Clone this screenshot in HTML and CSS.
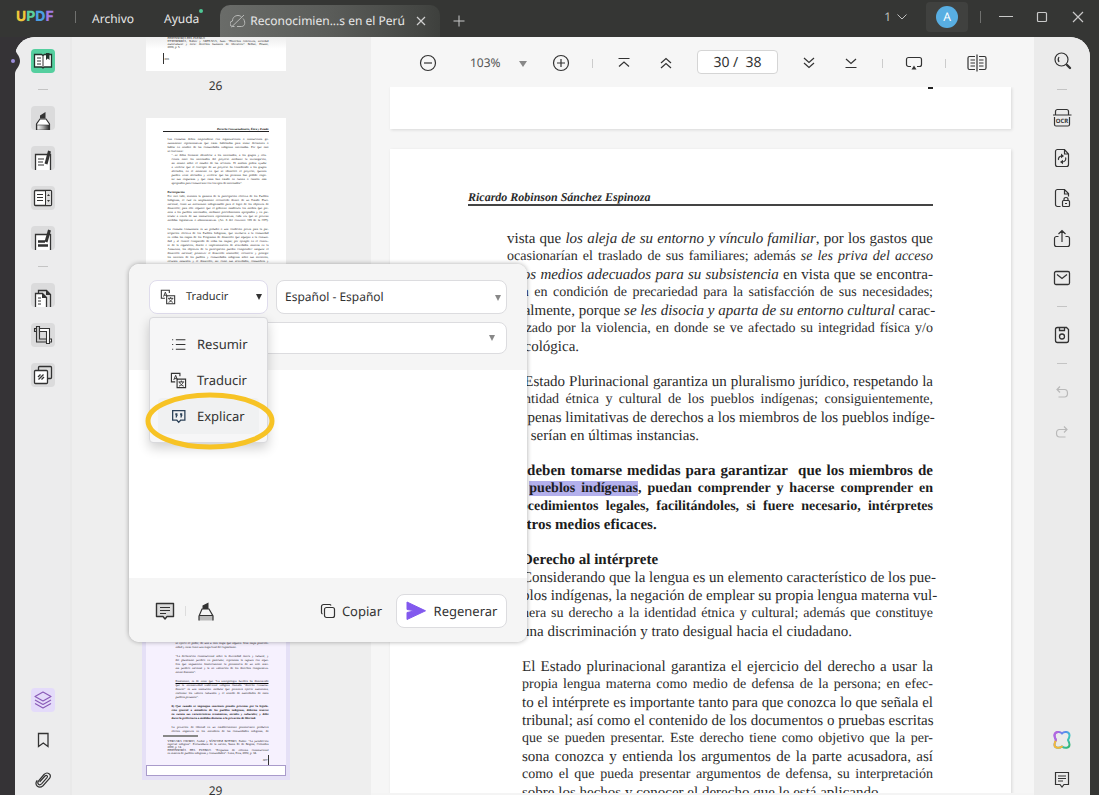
FILE: index.html
```html
<!DOCTYPE html>
<html lang="es">
<head>
<meta charset="utf-8">
<meta name="viewport" content="width=device-width, initial-scale=1">
<title>UPDF - Reconocimiento</title>
<link rel="stylesheet" href="styles.css">
</head>
<body>
<svg class="defs" width="0" height="0" aria-hidden="true">
  <defs>
    <linearGradient id="ink" x1="0" x2="1" y1="0" y2="0"><stop offset="0" stop-color="#fff"/><stop offset=".5" stop-color="#aaa"/><stop offset="1" stop-color="#333"/></linearGradient>
    <linearGradient id="flower" x1="0" x2="1" y1="0" y2="1"><stop offset="0" stop-color="#b45ad8"/><stop offset=".35" stop-color="#5a8df0"/><stop offset=".6" stop-color="#3cc3c9"/><stop offset="1" stop-color="#35b56a"/></linearGradient>
    <symbol id="translate" viewBox="0 0 18 18">
      <path d="M10.500 4.500V1.500H1.500v9h4M7.500 7.500h9v9h-9z" fill="none" stroke="currentColor" stroke-width="1.200"/>
      <path d="M4 8.500 6 3.500 8 8.500M4.700 7h2.600M9 10.500h6M12 9v1.500M14 10.500c-.500 2-2 3.500-4.500 4.500M10 10.500c.500 2 2 3.500 4.500 4.500" fill="none" stroke="currentColor"/>
    </symbol>
    <symbol id="note" viewBox="0 0 24 24">
      <path d="M3.500 4.500h17v13H14l-2 2.500-2-2.500H3.500z" fill="var(--note-fill, none)" stroke="currentColor" stroke-width="1.400" stroke-linejoin="round"/>
      <path d="M7 8.500h10M7 11.500h10M7 14.500h6" stroke="currentColor" stroke-width="1.200"/>
    </symbol>
  </defs>
</svg>

<header class="topbar">
  <div class="logo" aria-label="UPDF"><span class="logo-u">U</span><span class="logo-p">P</span><span class="logo-d">D</span><span class="logo-f">F</span></div>
  <i class="bar-sep"></i>
  <nav class="menus">
    <button type="button">Archivo</button>
    <button type="button" class="has-dot">Ayuda</button>
  </nav>
  <div class="tab">
    <svg width="16" height="14" viewBox="0 0 16 14" fill="none" stroke="#b9bab8"><path d="M4.500 12.500H3A2.700 2.700 0 0 1 2.500 7C2.500 3 5.500 1.500 8 1.500c1.500 0 2.500.500 3.500 1.500M13 4.500c2.500 2.500 2.500 8-1.500 8H7M1.500 13 14 1"/></svg>
    <span>Reconocimien...s en el Perú</span>
    <button type="button" aria-label="Cerrar pestaña"><svg width="10" height="10" viewBox="0 0 10 10" stroke="#d0d0d0" stroke-width="1.200"><path d="M1 1l8 8M9 1 1 9"/></svg></button>
  </div>
  <button type="button" class="plain" aria-label="Nueva pestaña"><svg width="12" height="12" viewBox="0 0 12 12" stroke="#c9c9c9"><path d="M6 .500v11M.500 6h11"/></svg></button>
  <div class="window">
    <button type="button" class="count">1 <svg width="10" height="6" viewBox="0 0 10 6" fill="none" stroke="#bfbfbf"><path d="M.500.500 5 5 9.500.500"/></svg></button>
    <button type="button" class="account"><span>A</span></button>
    <i class="bar-sep"></i>
    <button type="button" class="plain" aria-label="Minimizar"><svg width="14" height="12" viewBox="0 0 14 12" stroke="#c9c9c9"><path d="M0 5.500h14"/></svg></button>
    <button type="button" class="plain" aria-label="Maximizar"><svg width="12" height="12" viewBox="0 0 12 12" fill="none" stroke="#c9c9c9" stroke-width="1.200"><rect x="1.500" y="1.500" width="9" height="9" rx="1"/></svg></button>
    <button type="button" class="plain" aria-label="Cerrar"><svg width="12" height="12" viewBox="0 0 12 12" stroke="#c9c9c9" stroke-width="1.200"><path d="M1 1l10 10M11 1 1 11"/></svg></button>
  </div>
</header>

<div class="app">
  <svg class="notch" width="8" height="26" viewBox="0 0 8 26" aria-hidden="true"><path d="M2 0c0 5 5 7 5 13s-5 8-5 13H0V0z" fill="#353336"/></svg>
  <i class="notch-dot"></i>

  <nav class="rail rail-left" aria-label="Herramientas">
    <button type="button" class="tool is-reader" aria-label="Lector"><svg viewBox="0 0 24 24"><path d="M3.500 5.500h7l1.500 1 1.500-1h7v12.500h-7l-1.500 1-1.500-1h-7z" fill="#fff" stroke="#22332c" stroke-width="1.300"/><path d="M12 6.500V18M6 9h4M6 12h4M6 15h4" stroke="#333"/><path d="M15 4h3.500v7l-1.700-1.500L15 11z" fill="#22332c"/></svg></button>
    <i class="rail-sep"></i>
    <button type="button" class="tool" aria-label="Comentario"><svg viewBox="0 0 24 24"><path d="M5.500 24v-6L9 13h6l3.500 5v6" fill="#fff" stroke="#333" stroke-width="1.200"/><path d="M6 19h12v5H6z" fill="url(#ink)" stroke="#333" stroke-width=".6"/><path d="M9 12.500V9.500L14.500 6v6.500z" fill="#333"/></svg></button>
    <button type="button" class="tool" aria-label="Editar"><svg viewBox="0 0 24 24"><path d="M4.500 24V8.500h15V24" fill="#fff" stroke="#333" stroke-width="1.300"/><path d="M7 13h6M7 16h5M7 19h6" stroke="#333" stroke-width="1.200"/><path d="m18.500 5-3.500 13" stroke="#333" stroke-width="3"/></svg></button>
    <button type="button" class="tool" aria-label="Formulario"><svg viewBox="0 0 24 24"><rect x="3.500" y="4.500" width="17" height="15" rx="1" fill="#fff" stroke="#333" stroke-width="1.300"/><path d="M14.500 5h5.500v14h-5.500z" fill="#ddd"/><path d="M14.500 5v14M6 8.500h6M6 11.500h6M6 14.500h6" stroke="#333"/><path d="M16 10h3l-1.500-2zM16 14h3l-1.500 2z" fill="#333"/></svg></button>
    <button type="button" class="tool" aria-label="Rellenar y firmar"><svg viewBox="0 0 24 24"><path d="M4.500 24V8.500h15V24" fill="#fff" stroke="#333" stroke-width="1.300"/><path d="M7 15.500h7M7 19.500h10" stroke="#333" stroke-width="2.400"/><path d="m18.500 4-3.500 12" stroke="#333" stroke-width="3"/></svg></button>
    <i class="rail-sep"></i>
    <button type="button" class="tool" aria-label="Organizar páginas"><svg viewBox="0 0 24 24"><path d="M7.500 10V7.500h8l4 4V24" fill="#ddd" stroke="#333" stroke-width="1.300"/><path d="M4.500 24V10.500h7l4 4V24" fill="#fff" stroke="#333" stroke-width="1.300"/><path d="M11 10v5h5zM15 7v5h5z" fill="#333"/><path d="M7 15h3M7 18h3M7 21h3" stroke="#333"/></svg></button>
    <button type="button" class="tool" aria-label="Recortar"><svg viewBox="0 0 24 24" fill="none" stroke="#333" stroke-width="1.100"><path d="M5.500 3.500h3v12.500h8v3h-11zM3.500 5.500h2v3h-2z" fill="#ccc"/><path d="M8.500 5.500h10v15h-3V8.500h-7z" fill="#fff"/><path d="M18.500 16h2v3h-2z" fill="#fff"/></svg></button>
    <button type="button" class="tool" aria-label="Marca de agua"><svg viewBox="0 0 24 24" stroke="#333" stroke-width="1.300"><rect x="7.500" y="3.500" width="13" height="12" rx="1" fill="#ddd"/><rect x="3.500" y="7.500" width="13" height="13" rx="1" fill="#fff"/><path d="m7 14 2.500-2.500M7.500 16.500l5-5M10.500 16.500 13 14"/></svg></button>
    <span class="push"></span>
    <button type="button" class="tool is-layers" aria-label="Capas"><svg viewBox="0 0 24 24" fill="none" stroke="#8a5cb8" stroke-width="1.200" stroke-linejoin="round"><path d="m12 4 8 4.500-8 4.500-8-4.500zM4 12l8 4.500 8-4.500M4 15.500 12 20l8-4.500"/></svg></button>
    <button type="button" class="tool bare" aria-label="Marcadores"><svg viewBox="0 0 24 24" fill="none" stroke="#333" stroke-width="1.300"><path d="M7.500 5.500h9.500v13l-4.700-3.500-4.800 3.500z"/></svg></button>
    <button type="button" class="tool bare" aria-label="Adjuntos"><svg viewBox="0 0 24 24" fill="none" stroke="#333" stroke-width="1.200" stroke-linecap="round"><path d="m9 13.500 5-5.500c1.500-1.500 3.300 0 2 1.600l-5.200 6c-2.600 2.700-5.300 0-3.200-2.700L13 6.500c3.300-3.300 8.200-.200 5.500 4L12 17.700c-4 3.500-9-.500-6-5"/></svg></button>
  </nav>

  <aside class="thumbs" aria-label="Miniaturas">
    <figure>
      <div class="thumb thumb-cut">
        <div class="mini foot"><p>DEFENSORÍA DEL PUEBLO</p><p class="full">ETXEBERRÍA, Xabier y ARTEAGA, Juan. “Derechos colectivos, sociedad</p><p class="full">multicultural y ética: derechos humanos de liberación”. Bilbao, Deusto,</p><p>2006, p. 5.</p></div>
        <div class="mini folio">606</div>
      </div>
      <figcaption>26</figcaption>
    </figure>
    <figure>
      <div class="thumb">
        <div class="mini runner">Derecho Consuetudinario, Ética y Estado</div>
        <div class="mini body">
          <p class="full">Las consultas deben emprenderse con organizaciones o instituciones ge-</p>
          <p class="full">nuinamente representativas que están habilitadas para tomar decisiones o</p>
          <p class="full">hablar en nombre de las comunidades indígenas interesadas. Por que esto</p>
          <p>se concentra:</p>
          <div class="quote">
            <p class="full">“...se debía formarse identificar a los interesados, a los grupos y rela-</p>
            <p class="full">ciones entre los interesados del proyecto mediante la investigación,</p>
            <p class="full">así mismo sobre el estudio de las acciones. El análisis podría ayudar</p>
            <p class="full">a verificar que el concepto de un proyecto ha considerado a los grupos</p>
            <p class="full">afectados, en el momento en que se identificó el proyecto, quienes</p>
            <p class="full">pueden verse afectados y verificar que las personas han podido respe-</p>
            <p class="full">tar sus respuestas y que estas han estado en cuenta o canales más</p>
            <p>apropiados para comunicarse con los tipos de interesados”.</p>
          </div>
          <p class="head"><b>Participación</b></p>
          <p class="full">Por otro lado, tenemos la garantía de la participación efectiva de los Pueblos</p>
          <p class="full">Indígenas, el cual es ampliamente reconocido dentro de un Estado Pluri-</p>
          <p class="full">nacional, como un mecanismo indispensable para el logro de los objetivos de</p>
          <p class="full">desarrollo; para ello requiere que el gobierno establezca los medios que per-</p>
          <p class="full">mita a los pueblos interesados, mediante procedimientos apropiados y en par-</p>
          <p class="full">ticular a través de sus instituciones representativas, cada vez que se prevean</p>
          <p class="full">medidas legislativas o administrativas. (Art. 6 del convenio 169 de la OIT).</p>
          <p class="full head">La consulta comunitaria es un preludio o una condición previa para la par-</p>
          <p class="full">ticipación efectiva de los Pueblos Indígenas, que involucra a la comunidad</p>
          <p class="full">en todas las etapas de los Programas de desarrollo que aquejan a la comuni-</p>
          <p class="full">dad y al control compartido de todas las etapas; por ejemplo en el contex-</p>
          <p class="full">to de la regulación, diseño e implementación de actividades mineras en la</p>
          <p class="full">Amazonía, los objetivos de la participación pueden comprender: asegurar el</p>
          <p class="full">desarrollo nacional; promover el desarrollo sostenible; reconocer y proteger</p>
          <p class="full">los intereses de los pueblos y comunidades indígenas sobre sus territorios,</p>
          <p class="full">recursos naturales y el desarrollo, así como sus actividades, costumbres y</p>
          <p class="full">culturas, con miras a la diversidad biológica y cultural, a la variedad de</p>
        </div>
      </div>
      <figcaption>27</figcaption>
    </figure>
    <figure>
      <div class="thumb"></div>
      <figcaption>28</figcaption>
    </figure>
    <figure>
      <div class="thumb is-current">
        <div class="mini body last">
          <div class="inset">
            <p class="full">se ejerce el poder, de una u otra etapa que alguien. Una etapa postcolo-</p>
            <p>nidad y otras como una etapa final del capitalismo.</p>
            <p class="full head">“La declaración constitucional sobre la diversidad étnica y cultural, y</p>
            <p class="full">del pluralismo jurídico en particular, representa la ruptura con aque-</p>
            <p class="full">llos que impusieron históricamente la persistencia de un solo siste-</p>
            <p class="full">ma jurídico nacional y la no valoración de los derechos comparativa-</p>
            <p>mente distintos”.</p>
            <p class="full head"><u>Finalmente, es de notar que “La antropología Jurídica ha demostrado</u></p>
            <p class="full">que la normatividad tradicional indígena llamada “derecho consuetu-</p>
            <p class="full">dinario” es una institución modular que permitirá ejercer autonomía,</p>
            <p class="full">reafirmar los valores culturales y el sentido de autoridades de estos</p>
            <p>pueblos peruanos”.</p>
          </div>
          <div class="item">
            <p class="full head"><b>8) Que cuando se impongan sanciones penales previstas por la legisla-</b></p>
            <p class="full"><b>ción general a miembros de los pueblos indígenas, deberán tenerse</b></p>
            <p class="full"><b>en cuenta sus características económicas, sociales y culturales; y debe</b></p>
            <p><b>darse la preferencia a medidas distintas a la privación de libertad.</b></p>
            <p class="full head">La privación de libertad en un establecimiento penitenciario producirá</p>
            <p class="full">efectos negativos en los miembros de las comunidades indígenas, de</p>
          </div>
        </div>
        <i class="mini-rule"></i>
        <div class="mini foot"><p class="full">VERGARA OSORIO, Aníbal y SÁNCHEZ BOTERO, Esther. “La jurisdicción</p><p class="full">especial indígena”. Procuraduría de la nación, Santa Fe de Bogotá, Colombia</p><p>2000, p. 14.</p><p class="full">DEFENSORÍA DEL PUEBLO. “Propuesta de reforma constitucional</p><p>en materia de pueblos indígenas y comunidades”. Lima, Perú, 2002, p. 38.</p></div>
        <div class="mini folio right">607</div>
        <i class="view-box"></i>
      </div>
      <figcaption>29</figcaption>
    </figure>
  </aside>

  <main class="viewer">
    <div class="toolbar">
      <button type="button" aria-label="Alejar"><svg viewBox="0 0 22 22"><circle cx="11" cy="11" r="7.500"/><path d="M7 11h8"/></svg></button>
      <label class="zoom"><span class="sr">Zoom</span><select><option>103%</option></select></label>
      <button type="button" aria-label="Acercar"><svg viewBox="0 0 22 22"><circle cx="11" cy="11" r="7.500"/><path d="M7 11h8M11 7v8"/></svg></button>
      <i class="tool-sep"></i>
      <button type="button" aria-label="Primera página"><svg viewBox="0 0 22 22"><path d="M5.500 6.500h11M6 14.500l5-4.500 5 4.500"/></svg></button>
      <button type="button" aria-label="Página anterior"><svg viewBox="0 0 22 22"><path d="m6 11 5-4.500 5 4.500M6 16l5-4.500 5 4.500"/></svg></button>
      <label class="pager"><span class="sr">Página</span><input type="text" value="30 /  38"></label>
      <button type="button" aria-label="Página siguiente"><svg viewBox="0 0 22 22"><path d="m6 6 5 4.500L16 6M6 11l5 4.500 5-4.500"/></svg></button>
      <button type="button" aria-label="Última página"><svg viewBox="0 0 22 22"><path d="M5.500 15.500h11M6 7l5 4.500L16 7"/></svg></button>
      <i class="tool-sep"></i>
      <button type="button" aria-label="Presentación"><svg viewBox="0 0 22 22"><path d="M8 14.500H5.500a2 2 0 0 1-2-2V7.500a2 2 0 0 1 2-2h11a2 2 0 0 1 2 2v5a2 2 0 0 1-2 2H14"/><path d="m11 13.500 2.500 4h-5z" fill="#333" stroke="none"/></svg></button>
      <i class="tool-sep"></i>
      <button type="button" aria-label="Vista de página"><svg viewBox="0 0 22 22"><path d="M9 4.500H3.500a1.500 1.500 0 0 0-1.500 1.500v10a1.500 1.500 0 0 0 1.500 1.500H9M13 4.500h5.500a1.500 1.500 0 0 1 1.500 1.500v10a1.500 1.500 0 0 1-1.500 1.500H13M11 2.500v17M4.500 8h4.500M4.500 11h4.500M4.500 14h4.500M13 8h4.500M13 11h4.500M13 14h4.500"/></svg></button>
    </div>
    <div class="pages">
      <section class="sheet sheet-prev"><i></i></section>
      <article class="sheet sheet-main">
        <h1>Ricardo Robinson Sánchez Espinoza</h1>
        <div class="copy">
          <div class="para">
            <p class="full">vista que <em>los aleja de su entorno y vínculo familiar</em>, por los gastos que</p>
            <p class="full dense">ocasionarían el traslado de sus familiares; además <em>se les priva del acceso</em></p>
            <p class="full"><em>a los medios adecuados para su subsistencia</em> en vista que se encontra-</p>
            <p class="full dense">rían en condición de precariedad para la satisfacción de sus necesidades;</p>
            <p class="full">finalmente, porque <em>se les disocia y aparta de su entorno cultural</em> carac-</p>
            <p class="full dense">terizado por la violencia, en donde se ve afectado su integridad física y/o</p>
            <p>psicológica.</p>
          </div>
          <div class="para">
            <p class="full">El Estado Plurinacional garantiza un pluralismo jurídico, respetando la</p>
            <p class="full dense">identidad étnica y cultural de los pueblos indígenas; consiguientemente,</p>
            <p class="full">las penas limitativas de derechos a los miembros de los pueblos indíge-</p>
            <p>nas serían en últimas instancias.</p>
          </div>
          <div class="para strong">
            <p class="full">Se deben tomarse medidas para garantizar&nbsp; que los miembros de</p>
            <p class="full dense">los <mark>pueblos indígenas</mark>, puedan comprender y hacerse comprender en</p>
            <p class="full dense">procedimientos legales, facilitándoles, si fuere necesario, intérpretes</p>
            <p>u otros medios eficaces.</p>
          </div>
          <div class="para indent">
            <h2>Derecho al intérprete</h2>
            <p class="full">Considerando que la lengua es un elemento característico de los pue-</p>
            <p class="full">blos indígenas, la negación de emplear su propia lengua materna vul-</p>
            <p class="full dense">nera su derecho a la identidad étnica y cultural; además que constituye</p>
            <p>una discriminación y trato desigual hacia el ciudadano.</p>
          </div>
          <div class="para indent">
            <p class="full">El Estado plurinacional garantiza el ejercicio del derecho a usar la</p>
            <p class="full dense">propia lengua materna como medio de defensa de la persona; en efec-</p>
            <p class="full">to el intérprete es importante tanto para que conozca lo que señala el</p>
            <p class="full">tribunal; así como el contenido de los documentos o pruebas escritas</p>
            <p class="full dense">que se pueden presentar. Este derecho tiene como objetivo que la per-</p>
            <p class="full">sona conozca y entienda los argumentos de la parte acusadora, así</p>
            <p class="full dense">como el que pueda presentar argumentos de defensa, su interpretación</p>
            <p>sobre los hechos y conocer el derecho que le está aplicando.</p>
          </div>
        </div>
      </article>
    </div>
  </main>

  <nav class="rail rail-right" aria-label="Acciones">
    <button type="button" class="tool bare" aria-label="Buscar"><svg viewBox="0 0 24 24" fill="none" stroke="#333" stroke-width="1.200"><circle cx="11.500" cy="10.500" r="6.500"/><path d="M9 13c-1-1.500-1-3.500 0-5"/><path d="m17 16 3 3" stroke-width="2.400" stroke-linecap="round"/></svg></button>
    <i class="rail-sep"></i>
    <button type="button" class="tool bare" aria-label="OCR"><svg viewBox="0 0 24 24" fill="none" stroke="#333" stroke-width="1.200"><path d="M5.500 9V5.500a2 2 0 0 1 2-2h9a2 2 0 0 1 2 2V9M3 9h18.500M4.500 11v7.500a1.500 1.500 0 0 0 1.500 1.500h12a1.500 1.500 0 0 0 1.500-1.500v-7.500"/><text x="12" y="17" text-anchor="middle" class="ocr">OCR</text></svg></button>
    <button type="button" class="tool bare" aria-label="Convertir"><svg viewBox="0 0 24 24" fill="none" stroke="#333" stroke-width="1.200"><path d="M14.500 3.500h-7a2 2 0 0 0-2 2v13a2 2 0 0 0 2 2h9a2 2 0 0 0 2-2V8zM14.500 3.500V8h4"/><path d="M8.500 14c-.500-2 1-4 3.500-4M15.500 11.500c1 2-.500 4.500-3.500 4.500"/><path d="m11 7.500 3 2.500-3 2.200zM13 13.800v4.500L10 16z" fill="#333" stroke="none"/></svg></button>
    <button type="button" class="tool bare" aria-label="Proteger"><svg viewBox="0 0 24 24" fill="none" stroke="#333" stroke-width="1.200"><path d="M10.500 20.500h-3a2 2 0 0 1-2-2v-13a2 2 0 0 1 2-2h7l4 4v3M14.500 3.500V8h4"/><rect x="12.500" y="14.500" width="7" height="6" rx="1"/><path d="M14 14.500v-1.200c0-2.400 4-2.400 4 0v1.200M15 17.500h2"/></svg></button>
    <button type="button" class="tool bare" aria-label="Compartir"><svg viewBox="0 0 24 24" fill="none" stroke="#333" stroke-width="1.200"><path d="M8.500 10.500H6.500a2 2 0 0 0-2 2v6a2 2 0 0 0 2 2h11a2 2 0 0 0 2-2v-6a2 2 0 0 0-2-2H15.500M12 16V4.500M8.500 8 12 4.500 15.500 8"/></svg></button>
    <button type="button" class="tool bare" aria-label="Correo"><svg viewBox="0 0 24 24" fill="none" stroke="#333" stroke-width="1.300"><rect x="4.500" y="5.500" width="15" height="13" rx="1.500"/><path d="m7 8.500 5 4 5-4"/></svg></button>
    <i class="rail-sep"></i>
    <button type="button" class="tool bare" aria-label="Guardar"><svg viewBox="0 0 24 24" fill="none" stroke="#333" stroke-width="1.300"><path d="M5.500 6.500a2 2 0 0 1 2-2h9l2 2v11a2 2 0 0 1-2 2h-9a2 2 0 0 1-2-2zM9.500 5v2.500h5V5"/><circle cx="12" cy="13.500" r="2.500"/></svg></button>
    <i class="rail-sep"></i>
    <button type="button" class="tool bare" aria-label="Deshacer"><svg viewBox="0 0 24 24" fill="none" stroke="#b9b9b9" stroke-width="1.200"><path d="M10 6.500 7 9.500l3 3M7 9.500h7.500c4 0 4 7.500 0 7.500H8.500"/></svg></button>
    <button type="button" class="tool bare" aria-label="Rehacer"><svg viewBox="0 0 24 24" fill="none" stroke="#b9b9b9" stroke-width="1.200"><path d="m14 6.500 3 3-3 3M17 9.500H9.500c-4 0-4 7.500 0 7.500h6"/></svg></button>
    <span class="push"></span>
    <button type="button" class="tool bare" aria-label="UPDF AI"><svg viewBox="0 0 24 24" fill="none" stroke-width="2" stroke-linecap="round"><path d="M12 5.500c2-2.500 7.500-2 7.500 2 0 1.500-.500 2.500-1.500 4.500 1 2 1.500 3 1.500 4.500 0 4-5 4-7.500 2-2.500 2-7.500 2-7.500-2 0-1.500.500-2.500 1.500-4.500-1-2-1.500-3-1.500-4.500 0-4 5.500-4.500 7.500-2z" stroke="url(#flower)"/><path d="M6 12c-1 2-1.500 3-1.500 4.500 0 4 5 4 7.500 2" stroke="#f5b83c"/><path d="M6 12c-1-2-1.500-3-1.500-4.500 0-2 1.500-3.200 3.500-3.500" stroke="#b267e0"/></svg></button>
    <button type="button" class="tool bare" aria-label="Notas"><svg viewBox="0 0 24 24" fill="none" stroke="#333" stroke-width="1.200"><path d="M5.500 4.500h13v12H14l-2 2.500-2-2.500H5.500z"/><path d="M8 8h8M8 10.500h8M8 13h5"/></svg></button>
  </nav>

  <section class="dialog" aria-label="UPDF AI">
    <div class="dialog-head">
      <div class="row">
        <button type="button" class="field mode" aria-haspopup="menu" aria-expanded="true"><svg width="16" height="16"><use href="#translate"/></svg><span>Traducir</span><i class="caret dark"></i></button>
        <label class="field lang"><span class="sr">Idiomas</span><select><option>Español - Español</option></select><i class="caret"></i></label>
      </div>
      <label class="field range"><span class="sr">Páginas</span><select><option></option></select><i class="caret"></i></label>
    </div>
    <div class="dialog-body"></div>
    <div class="dialog-foot">
      <button type="button" class="icon-btn filled" aria-label="Añadir nota"><svg><use href="#note"/></svg></button>
      <i class="foot-sep"></i>
      <button type="button" class="icon-btn" aria-label="Resaltar"><svg viewBox="0 0 24 24"><path d="M5 16.500h14v5H5z" fill="#bbb"/><path d="M5 21.500v-4.500L8 10h7l4 7v4.500M5 16.500h14" fill="none" stroke="#333" stroke-width="1.200"/><path d="M8.500 10V6.500L14.500 3.500V10z" fill="#333"/></svg></button>
      <span class="push"></span>
      <button type="button" class="copy-btn"><svg width="16" height="16" viewBox="0 0 16 16" fill="none" stroke="#333" stroke-width="1.200"><rect x="4.500" y="4.500" width="10" height="10" rx="2"/><path d="M2.500 11a1.500 1.500 0 0 1-1-1.500v-6a2 2 0 0 1 2-2h6A1.500 1.500 0 0 1 11 2.500"/></svg>Copiar</button>
      <button type="button" class="regen"><svg width="20" height="20" viewBox="0 0 20 20"><path d="M1 1 19.500 9.800 1 18.500V11.500L9 9.800 1 8.500z" fill="#8259ee" stroke="#8259ee" stroke-linejoin="round"/></svg>Regenerar</button>
    </div>
    <div class="menu" role="menu">
      <button type="button" role="menuitem"><svg viewBox="0 0 16 16" fill="none" stroke="#333" stroke-width="1.100"><path d="M2 3.500h1M2 8h1M2 12.500h1M5.500 3.500h9M5.500 8h9M5.500 12.500h9"/></svg>Resumir</button>
      <button type="button" role="menuitem"><svg><use href="#translate"/></svg>Traducir</button>
      <button type="button" role="menuitem" class="is-hover"><svg viewBox="0 0 16 16" fill="none" stroke="#2c4258" stroke-width="1.200"><path d="M2.500 2.500h11.500v9H10L8.200 13.500l-1.700-2h-4z"/><path d="M5 5h2v2H5zM9.500 5h2v2h-2z" fill="#2c4258" stroke="none"/><path d="M6.600 6.500l-.9 2.500M11.100 6.500l-.9 2.500"/></svg>Explicar</button>
    </div>
    <svg class="ring" width="130" height="58" viewBox="0 0 130 58" aria-hidden="true"><ellipse cx="65" cy="29" rx="62" ry="26" fill="none" stroke="#f7c325" stroke-width="5"/></svg>
  </section>
</div>
</body>
</html>
```
FILE: styles.css
```css
* { box-sizing: border-box; }

body {
  margin: 0;
  height: 100vh;
  overflow: hidden;
  display: flex;
  flex-direction: column;
  background: linear-gradient(90deg, #353336 50%, #353634 50%);
  color: #333;
  font: 13px/18px "Noto Sans", "Open Sans", sans-serif;
  text-rendering: geometricPrecision;
}

button, input, select { font: inherit; color: inherit; text-rendering: inherit; }
button { border: 0; padding: 0; background: none; display: inline-flex; align-items: center; justify-content: center; }
p, h1, h2, figure { margin: 0; }
svg { display: block; flex: none; }
i { display: block; flex: none; }
.defs { position: absolute; }
.push { flex: 1; }
.sr { position: absolute; width: 1px; height: 1px; overflow: hidden; clip-path: inset(50%); }

/* Title bar */
.topbar { flex: none; height: 37px; padding-left: 16px; display: flex; align-items: center; background: #353634; color: #e8e8e8; font-size: 12px; }
.logo { font: 800 14px/16px Inter, sans-serif; width: 42px; margin-bottom: 3px; display: flex; }
.logo-u { color: #eec63a; }
.logo-p { color: #5ccf9c; }
.logo-d { color: #4a9fe2; }
.logo-f { color: #a27be4; }
.bar-sep { width: 1px; height: 12px; background: #70716f; margin: 0 16px 3px 17px; }
.menus { display: flex; gap: 30px; }
.menus button { position: relative; }
.has-dot::after { content: ""; position: absolute; right: -4px; top: -1px; width: 4px; height: 4px; border-radius: 50%; background: #4fc795; }
.tab { align-self: flex-end; width: 220px; height: 32px; margin-left: 21px; padding: 0 14px 0 10px; border-radius: 10px 10px 0 0; display: flex; align-items: center; gap: 4px; background: linear-gradient(90deg, #6a6c69, #5a5c59 50%, #454744 90%, #3e403d); }
.tab span { flex: 1; white-space: nowrap; }
.plain { width: 36px; height: 30px; }
.topbar > .plain { width: 38px; margin-top: 4px; }
.window { margin-left: auto; height: 30px; margin-bottom: 3px; padding-right: 3px; display: flex; align-items: center; }
.window .bar-sep { margin: 0 7px 0 12px; }
.count { gap: 6px; color: #bfbfbf; margin-right: 19px; }
.account { width: 42px; height: 30px; border-radius: 4px; background: #40413f; }
.account span { width: 22px; height: 22px; border-radius: 50%; background: #58aee2; color: #fff; line-height: 22px; }

/* Application frame */
.app { position: relative; flex: 1; min-height: 0; margin: 0 9px 0 15px; border-radius: 20px 20px 0 0; display: flex; background: #f6f6f6; }
.notch { position: absolute; left: -2px; top: 11px; }
.notch-dot { position: absolute; left: -4px; top: 22px; width: 4px; height: 4px; border-radius: 50%; background: #9d8fdc; }

.rail { flex: none; width: 56px; padding: 12px 0 3px; display: flex; flex-direction: column; align-items: center; gap: 16px; background: #ececed; }
.rail .push { margin-bottom: -16px; }
.rail-left { border-radius: 20px 0 0 0; border-right: 2px solid #e9e9e9; width: 57px; }
.rail-right { border-radius: 0 20px 0 0; background: #ebebeb; }
.rail-sep { width: 10px; height: 1px; background: #c4c4c4; }
.tool { width: 24px; height: 24px; border-radius: 4px; background: #dbdbdc; overflow: hidden; flex: none; }
.tool svg { width: 24px; height: 24px; }
.tool.bare { background: none; }
.tool.is-reader { background: #55cf9f; }
.tool.is-layers { background: #e4dbfa; }
.ocr { font: 700 6px "Noto Sans", sans-serif; fill: #333; stroke: none; }

/* Page thumbnails */
.thumbs { flex: none; width: 299px; overflow: hidden; display: flex; flex-direction: column; align-items: center; padding-right: 12px; background: #eee; }
.thumbs figure { flex: none; width: 140px; }
.thumbs figcaption { height: 47px; padding-top: 6px; text-align: center; font-size: 12px; line-height: 18px; }
.thumb { position: relative; height: 188px; background: #fff; overflow: hidden; padding: 9px 17px 0; }
.thumb-cut { height: 34px; padding-top: 0; background: linear-gradient(#eee, #fff 12px); }
.mini { font: 3px/4px "Liberation Serif", serif; color: #000; }
.mini p { white-space: nowrap; }
.full { text-align: justify; text-align-last: justify; }
.mini .head { margin-top: 5px; }
.mini.runner { text-align: right; border-bottom: 1px solid #222; font-weight: 700; font-style: italic; }
.mini.body { padding: 5px 0 0 5px; }
.mini .quote { padding: 0 2px 0 4px; }
.mini.foot { padding-left: 5px; line-height: 3px; }
.thumb-cut .folio { margin-top: 4px; }
.mini.folio { height: 11px; border-left: 1px solid #333; padding: 4px 0 0 1px; }
.mini.folio.right { border-left: 0; border-right: 1px solid #333; text-align: right; padding-top: 3px; }
.thumb.is-current { background: #f6f1fe; overflow: visible; display: flex; flex-direction: column; justify-content: flex-end; padding: 0 17px; box-shadow: 0 0 0 4px #e5e0f6; }
.mini .inset { padding-left: 8px; }
.mini .item { padding-left: 4px; }
.mini-rule { width: 35px; height: 2px; background: #888; margin: 2px 0 3px; }
.is-current .folio { flex: none; height: 10px; }
.view-box { height: 11px; margin: 0 -17px; border: 1px solid #a99bcb; background: #fff; }

/* Viewer */
.viewer { flex: 1; min-width: 0; display: flex; flex-direction: column; background: #f6f6f6; }
.toolbar { flex: none; height: 50px; display: flex; align-items: center; justify-content: center; gap: 20px; padding-top: 2px; }
.toolbar button { width: 22px; height: 22px; }
.toolbar svg { width: 22px; height: 22px; fill: none; stroke: #333; stroke-width: 1.2px; }
.tool-sep { width: 1px; height: 9px; background: #ccc; }
.zoom { position: relative; width: 71px; padding-left: 11px; }
.zoom select { appearance: none; border: 0; background: none; padding: 0; width: 60px; height: 20px; font-size: 12px; color: #555; }
.zoom::after { content: ""; position: absolute; right: 3px; top: 8px; border: 4px solid transparent; border-top: 6px solid #888; border-bottom: 0; }
.pager input { display: block; width: 81px; height: 24px; padding: 0; text-align: center; border: 1px solid #d5d5d5; border-radius: 4px; background: #fff; margin-top: -2px; font-size: 14px; }

.pages { flex: 1; min-height: 0; overflow: hidden; padding: 0 23px 0 19px; border-bottom: 2px solid #f4f4f4; }
.sheet { background: #fff; box-shadow: 1px 1px 3px #0000001f; }
.sheet-prev { height: 42px; margin-bottom: 20px; padding-right: 78px; }
.sheet-prev i { width: 5px; height: 2px; margin-left: auto; background: #222; }
.sheet-main { padding: 41px 78px 40px; color: #2b2b2b; font-family: "Liberation Serif", "Times New Roman", serif; }
.sheet h1 { font: italic 700 12px/14px "Liberation Serif", serif; border-bottom: 2px solid #444; }
.copy { padding: 24px 0 0 39px; font-size: 15px; line-height: 18px; display: grid; grid-template-columns: minmax(0, 1fr); gap: 17px; }
.copy p, .copy h2 { white-space: nowrap; }
.copy h2 { font-size: 15px; line-height: 18px; color: #1c1c1c; }
.copy .dense { font-size: 14px; }
.strong { font-weight: 700; color: #1c1c1c; }
.indent { padding-left: 15px; }
mark { background: #b3b0ec; color: inherit; }

/* Assistant dialog */
.dialog { position: absolute; left: 114px; top: 227px; width: 398px; height: 378px; border-radius: 10px; background: #fff; box-shadow: 0 0 5px #00000055; display: flex; flex-direction: column; }
.dialog-head { padding: 16px 20px; display: flex; flex-direction: column; gap: 8px; background: #f5f5f5; border-radius: 10px 10px 0 0; }
.row { display: flex; gap: 8px; }
.field { position: relative; height: 34px; display: flex; align-items: center; border: 1px solid #dcdcdf; border-radius: 8px; background: #fff; }
.field select { appearance: none; border: 0; background: none; width: 100%; height: 100%; padding: 0 8px; font-size: 12px; }
.mode { width: 119px; padding: 0 5px 0 10px; gap: 10px; font-size: 11px; justify-content: flex-start; border-color: #dfdcec; }
.mode .caret { margin-left: auto; }
.lang { flex: 1; }
.range { height: 32px; }
.caret { border: 3px solid transparent; border-top: 6px solid #888; border-bottom: 0; }
.caret.dark { border-top-color: #333; }
.field select + .caret { position: absolute; right: 5px; top: 14px; }
.range select + .caret { right: 11px; top: 12px; }
.dialog-body { flex: 1; }
.dialog-foot { height: 64px; padding: 2px 20px 0 24px; display: flex; align-items: center; background: #f5f5f5; border-radius: 0 0 10px 10px; }
.icon-btn svg { width: 24px; height: 24px; }
.filled svg { --note-fill: #dcdcdc; }
.foot-sep { width: 1px; height: 10px; background: #ddd; margin: 0 8px; }
.copy-btn { gap: 6px; margin-right: 14px; }
.regen { width: 111px; height: 34px; gap: 8px; border: 1px solid #dcdcdf; border-radius: 8px; background: #fff; }

.menu { position: absolute; left: 20px; top: 53px; width: 119px; padding: 8px; display: flex; flex-direction: column; background: #f6f6f7; border: 1px solid #d9d9dc; border-radius: 4px; box-shadow: 0 5px 12px #00000030; }
.menu button { height: 36px; padding-left: 12px; gap: 10px; justify-content: flex-start; border-radius: 4px; }
.menu svg { width: 17px; height: 17px; }
.menu .is-hover { background: #f0f1f2; }
.ring { position: absolute; left: 16px; top: 128px; }
```
